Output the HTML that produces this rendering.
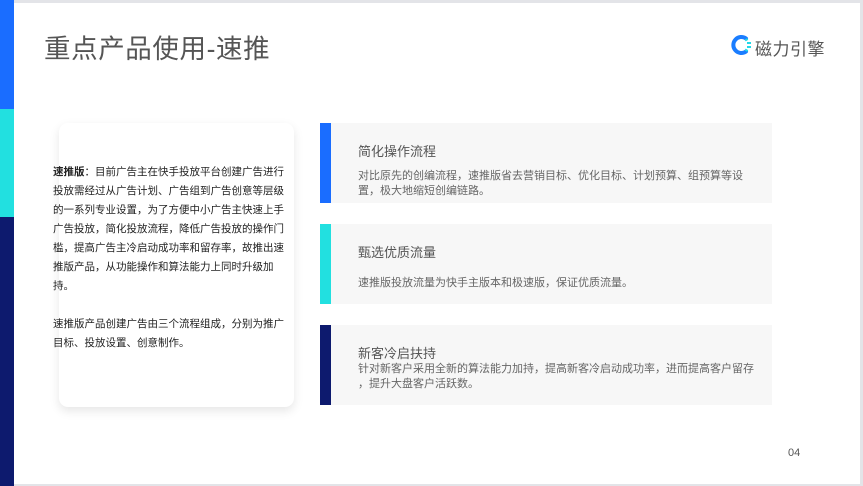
<!DOCTYPE html>
<html><head><meta charset="utf-8"><style>
*{margin:0;padding:0;box-sizing:border-box}
body{width:863px;height:486px;background:#fff;position:relative;overflow:hidden;font-family:"Liberation Sans","Noto Sans CJK SC",sans-serif;color:#333}
.a{position:absolute}
.box{position:absolute;left:320px;width:452px;height:80px;background:#f7f7f7}
.bar{position:absolute;left:0;top:0;width:11px;height:80px}
.t{position:absolute;left:38px;font-size:13px;color:#555}
.d{position:absolute;left:38px;font-size:11px;color:#666;line-height:15px;width:420px;white-space:nowrap}
</style></head><body>
<div class="a" style="left:0;top:0;width:863px;height:3px;background:#e3e4e8"></div>
<div class="a" style="right:0;top:0;width:3px;height:486px;background:#e3e4e8"></div>
<div class="a" style="left:0;bottom:0;width:863px;height:2px;background:#e3e4e8"></div>
<div class="a" style="left:0;top:0;width:14px;height:109px;background:#1a6dff"></div>
<div class="a" style="left:0;top:109px;width:14px;height:108px;background:#22e0e0"></div>
<div class="a" style="left:0;top:217px;width:14px;height:269px;background:#0d1a6e"></div>
<div class="a" style="left:44px;top:27px;font-size:26.5px;color:#555;letter-spacing:0.6px">重点产品使用-速推</div>
<svg class="a" style="left:731px;top:34px" width="22" height="22" viewBox="0 0 22 22"><path d="M15 4.5A8 8 0 1 0 15 17.5" fill="none" stroke="#1a7dff" stroke-width="4" stroke-linecap="round"/><g fill="#22d8e8"><rect x="16" y="8" width="4" height="2"/><rect x="16" y="12" width="4" height="2"/><rect x="14" y="5" width="3" height="2" transform="rotate(-30 15 6)"/><rect x="14" y="15" width="3" height="2" transform="rotate(30 15 16)"/></g></svg>
<div class="a" style="left:755px;top:35px;font-size:17px;color:#555;letter-spacing:0.5px">磁力引擎</div>
<div class="a" style="left:59px;top:123px;width:235px;height:284px;background:#fff;border-radius:9px;box-shadow:0 4px 10px rgba(0,0,0,0.1)"></div>
<div class="a" style="left:53px;top:163px;width:240px;font-size:10.5px;line-height:19px;color:#222">
<p><b>速推版</b>：目前广告主在快手投放平台创建广告进行投放需经过从广告计划、广告组到广告创意等层级的一系列专业设置，为了方便中小广告主快速上手广告投放，简化投放流程，降低广告投放的操作门槛，提高广告主冷启动成功率和留存率，故推出速推版产品，从功能操作和算法能力上同时升级加持。</p>
<p style="margin-top:19px">速推版产品创建广告由三个流程组成，分别为推广目标、投放设置、创意制作。</p>
</div>
<div class="box" style="top:123px"><div class="bar" style="background:#1a6dff"></div><div class="t" style="top:18px">简化操作流程</div><div class="d" style="top:46px">对比原先的创编流程，速推版省去营销目标、优化目标、计划预算、组预算等设<br>置，极大地缩短创编链路。</div></div>
<div class="box" style="top:224px"><div class="bar" style="background:#22e0e0"></div><div class="t" style="top:18px">甄选优质流量</div><div class="d" style="top:52px">速推版投放流量为快手主版本和极速版，保证优质流量。</div></div>
<div class="box" style="top:325px"><div class="bar" style="background:#0d1a6e"></div><div class="t" style="top:18px">新客冷启扶持</div><div class="d" style="top:37px">针对新客户采用全新的算法能力加持，提高新客冷启动成功率，进而提高客户留存<br>，提升大盘客户活跃数。</div></div>
<div class="a" style="left:788px;top:447px;font-size:11px;color:#555">04</div>
</body></html>
